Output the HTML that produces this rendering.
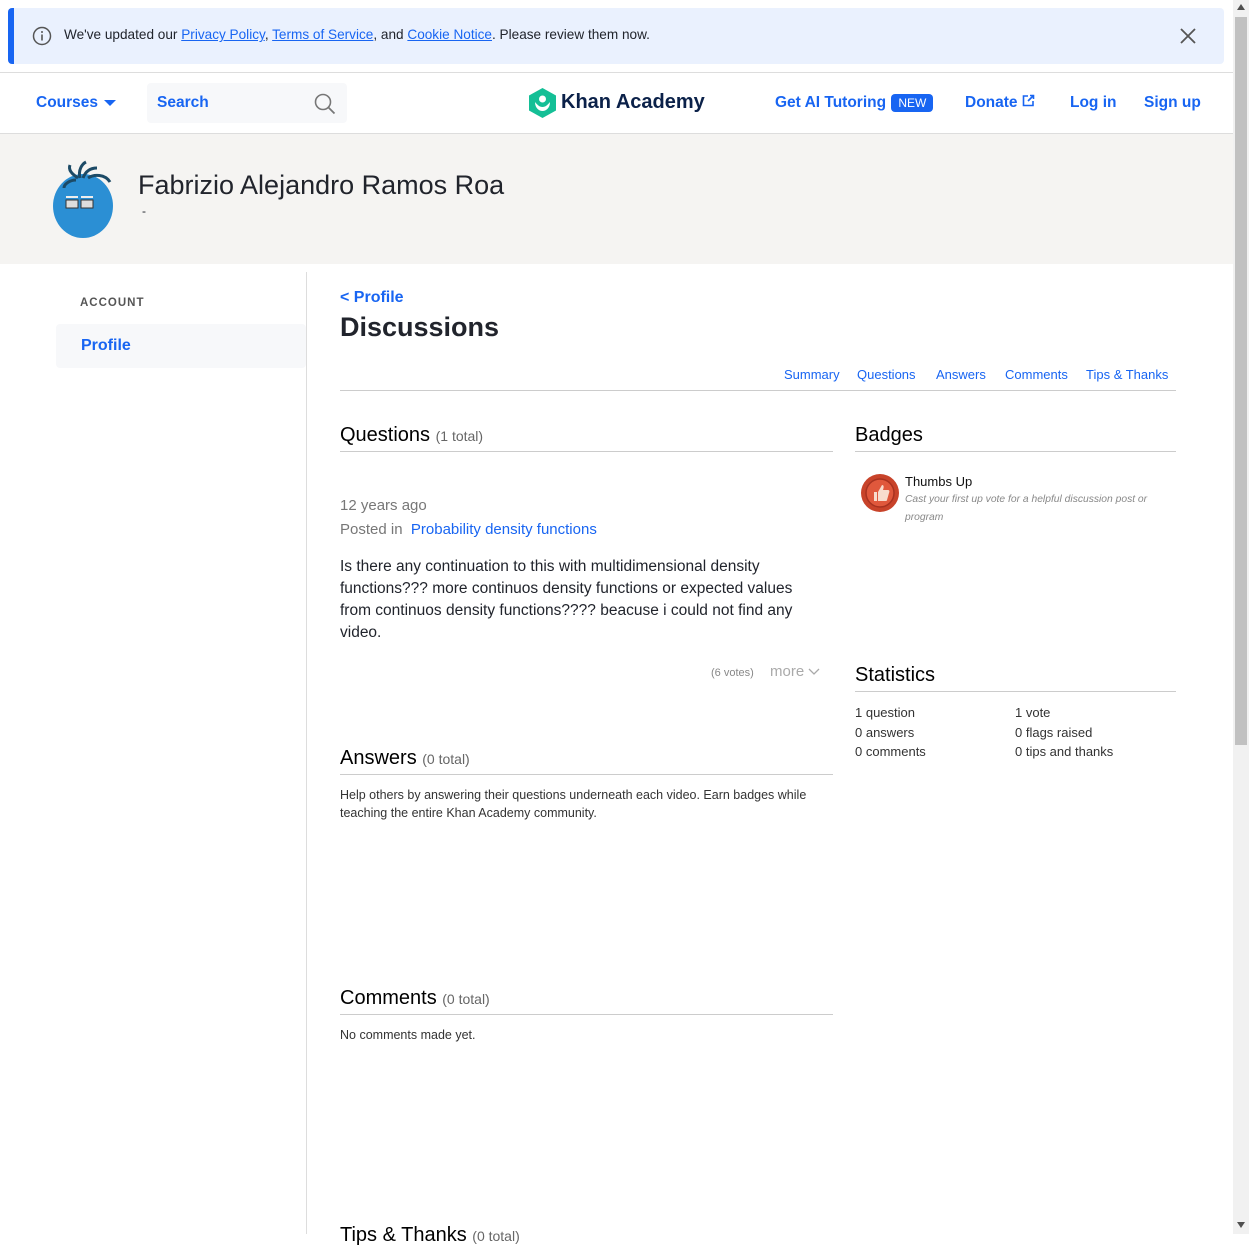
<!DOCTYPE html>
<html><head><meta charset="utf-8">
<style>
*{box-sizing:border-box;margin:0;padding:0}
html,body{width:1249px;height:1234px;overflow:hidden;background:#fff;font-family:"Liberation Sans",sans-serif;color:#21242c}
a{color:#1865f2;text-decoration:none}
.banner{position:absolute;left:8px;top:8px;width:1216px;height:56px;background:#eaf1fe;border-left:6px solid #1865f2;border-radius:4px;font-size:13.6px;color:#21242c}
.banner .t{position:absolute;left:50px;top:19px}
.banner .t a{text-decoration:underline}
.hdr{position:absolute;left:0;top:72px;width:1233px;height:62px;border-top:1px solid #ddd;border-bottom:1px solid #ddd}
.nav{position:absolute;font-size:15.5px;font-weight:bold;color:#1865f2;top:21px}
.search{position:absolute;left:147px;top:10px;width:200px;height:40px;background:#f7f8fa;border-radius:4px}
.band{position:absolute;left:0;top:134px;width:1233px;height:130px;background:#f5f4f2}
.name{position:absolute;left:138px;top:36px;font-size:27px;color:#21242c}
.side{position:absolute;left:306px;top:272px;width:1px;height:962px;background:#ddd}
.acct{position:absolute;left:80px;top:297px;font-size:11.5px;letter-spacing:1px;color:#555;font-weight:bold}
.prof{position:absolute;left:56px;top:324px;width:250px;height:44px;background:#f7f8fa;border-radius:4px;font-size:16px;font-weight:bold;color:#1865f2;padding:13px 0 0 25px}
.tabs{position:absolute;top:367px;font-size:13px;color:#1865f2}
.h2{position:absolute;font-size:20px;color:#000}
.h2 span{font-size:14px;color:#666}
.line{position:absolute;height:1px;background:#ccc}
.p{position:absolute;font-size:13px;color:#333;line-height:18px}
.scroll{position:absolute;left:1233px;top:0;width:16px;height:1234px;background:#f1f1f1}
.thumb{position:absolute;left:1235px;top:17px;width:12px;height:728px;background:#c1c1c1}
</style></head><body>
<div class="banner">
<svg style="position:absolute;left:18px;top:18px" width="20" height="20" viewBox="0 0 20 20"><circle cx="10" cy="10" r="8.5" fill="none" stroke="#555" stroke-width="1.5"/><rect x="9.2" y="8.5" width="1.6" height="6" fill="#555"/><circle cx="10" cy="6" r="1" fill="#555"/></svg>
<div class="t">We've updated our <a>Privacy Policy</a>, <a>Terms of Service</a>, and <a>Cookie Notice</a>. Please review them now.</div>
<svg style="position:absolute;left:1166px;top:20px" width="16" height="16" viewBox="0 0 16 16"><path d="M1 1L15 15M15 1L1 15" stroke="#555" stroke-width="1.8"/></svg>
</div>
<div class="hdr">
<div class="nav" style="left:36px">Courses <svg width="12" height="8" viewBox="0 0 12 8" style="margin-left:2px"><path d="M0 1h12L6 7z" fill="#1865f2"/></svg></div>
<div class="search"><span style="position:absolute;left:10px;top:11px;font-size:15.5px;font-weight:bold;color:#1865f2">Search</span>
<svg style="position:absolute;left:167px;top:10px" width="22" height="22" viewBox="0 0 22 22"><circle cx="9" cy="9" r="7.5" fill="none" stroke="#777" stroke-width="1.6"/><path d="M14.5 14.5L20.5 20.5" stroke="#777" stroke-width="1.8"/></svg></div>
<svg style="position:absolute;left:529px;top:15px" width="27" height="30" viewBox="0 0 27 30"><path d="M13.5 0L27 7.5V22.5L13.5 30L0 22.5V7.5z" fill="#14bf96"/><circle cx="13.5" cy="11" r="3.5" fill="#fff"/><path d="M6 14c0 6 4 9 7.5 9v-4c-3 0-5-2-7.5-5zM21 14c0 6-4 9-7.5 9v-4c3 0 5-2 7.5-5z" fill="#fff"/></svg>
<div class="nav" style="left:561px;top:18px;font-size:20px;color:#0b2149">Khan Academy</div>
<div class="nav" style="left:775px">Get AI Tutoring <span style="background:#1865f2;color:#fff;font-size:12px;font-weight:normal;padding:2px 7px;border-radius:4px;margin-left:1px">NEW</span></div>
<div class="nav" style="left:965px">Donate <svg width="13" height="13" viewBox="0 0 13 13"><path d="M6 2H1.5V11.5H11V7M8 1.5h3.5V5M11.5 1.5L6 7" fill="none" stroke="#1865f2" stroke-width="1.6"/></svg></div>
<div class="nav" style="left:1070px">Log in</div>
<div class="nav" style="left:1144px">Sign up</div>
</div>
<div class="band">
<svg style="position:absolute;left:50px;top:26px" width="66" height="80" viewBox="0 0 66 80"><ellipse cx="33" cy="46" rx="30" ry="32" fill="#2b8fd4"/><path d="M30 18C28 10 32 4 36 2M33 18C36 10 42 8 47 8M28 18C22 14 18 10 20 5M38 18C44 14 55 14 60 22M26 20C20 20 14 24 14 28" stroke="#1c4a66" stroke-width="3" fill="none"/><rect x="16" y="40" width="12" height="8" fill="#ddd" stroke="#333"/><rect x="31" y="40" width="12" height="8" fill="#ddd" stroke="#333"/><rect x="16" y="36" width="12" height="2" fill="#eee"/><rect x="31" y="36" width="12" height="2" fill="#eee"/></svg>
<div class="name">Fabrizio Alejandro Ramos Roa</div>
<div style="position:absolute;left:142px;top:70px;font-size:12px">-</div>
</div>
<div class="side"></div>
<div class="acct">ACCOUNT</div>
<div class="prof">Profile</div>
<div style="position:absolute;left:340px;top:289px;font-size:16px;font-weight:bold;color:#1865f2">&lt; Profile</div>
<div style="position:absolute;left:340px;top:312px;font-size:27px;font-weight:bold;color:#21242c">Discussions</div>
<div class="tabs" style="left:784px">Summary</div>
<div class="tabs" style="left:857px">Questions</div>
<div class="tabs" style="left:936px">Answers</div>
<div class="tabs" style="left:1005px">Comments</div>
<div class="tabs" style="left:1086px">Tips &amp; Thanks</div>
<div class="line" style="left:340px;top:390px;width:836px"></div>

<div class="h2" style="left:340px;top:424px">Questions <span>(1 total)</span></div>
<div class="line" style="left:340px;top:451px;width:493px"></div>
<div class="p" style="left:340px;top:497px;font-size:15px;color:#777">12 years ago</div>
<div class="p" style="left:340px;top:521px;font-size:15px;color:#777">Posted in&nbsp; <a>Probability density functions</a></div>
<div class="p" style="left:340px;top:556px;width:480px;font-size:15.5px;line-height:22px;color:#21242c">Is there any continuation to this with multidimensional density functions??? more continuos density functions or expected values from continuos density functions???? beacuse i could not find any video.</div>
<div class="p" style="left:711px;top:664px;font-size:11px;color:#888">(6 votes)</div>
<div class="p" style="left:770px;top:663px;font-size:15px;color:#aaa">more <svg width="12" height="8" viewBox="0 0 12 8"><path d="M1 1l5 5 5-5" fill="none" stroke="#aaa" stroke-width="1.3"/></svg></div>

<div class="h2" style="left:340px;top:747px">Answers <span>(0 total)</span></div>
<div class="line" style="left:340px;top:774px;width:493px"></div>
<div class="p" style="left:340px;top:786px;width:490px;font-size:12.5px">Help others by answering their questions underneath each video. Earn badges while teaching the entire Khan Academy community.</div>

<div class="h2" style="left:340px;top:987px">Comments <span>(0 total)</span></div>
<div class="line" style="left:340px;top:1014px;width:493px"></div>
<div class="p" style="left:340px;top:1026px;font-size:12.5px">No comments made yet.</div>
<div class="h2" style="left:340px;top:1224px">Tips &amp; Thanks <span>(0 total)</span></div>

<div class="h2" style="left:855px;top:424px">Badges</div>
<div class="line" style="left:855px;top:451px;width:321px"></div>
<svg style="position:absolute;left:860px;top:473px" width="40" height="40" viewBox="0 0 40 40"><circle cx="20" cy="20" r="19" fill="#c8432a"/><circle cx="20" cy="20" r="14" fill="#e0583c" stroke="#a83220" stroke-width="1.5"/><path d="M14 19h3v9h-3zM18 19l4-7c2 0 2 2 1 5h5c1 0 2 1 1 3l-2 7c0 1-1 1-2 1h-7z" fill="#f8dccd"/></svg>
<div class="p" style="left:905px;top:473px;font-size:13px;color:#111">Thumbs Up</div>
<div class="p" style="left:905px;top:491px;width:255px;font-size:10.3px;font-style:italic;color:#888">Cast your first up vote for a helpful discussion post or program</div>

<div class="h2" style="left:855px;top:664px">Statistics</div>
<div class="line" style="left:855px;top:691px;width:321px"></div>
<div class="p" style="left:855px;top:703px;font-size:13px;line-height:19.5px">1 question<br>0 answers<br>0 comments</div>
<div class="p" style="left:1015px;top:703px;font-size:13px;line-height:19.5px">1 vote<br>0 flags raised<br>0 tips and thanks</div>

<div class="scroll"></div><div class="thumb"></div>
<svg style="position:absolute;left:1237px;top:4px" width="8" height="6"><path d="M0 6L4 0L8 6z" fill="#505050"/></svg>
<svg style="position:absolute;left:1237px;top:1222px" width="8" height="6"><path d="M0 0L4 6L8 0z" fill="#505050"/></svg>
</body></html>
